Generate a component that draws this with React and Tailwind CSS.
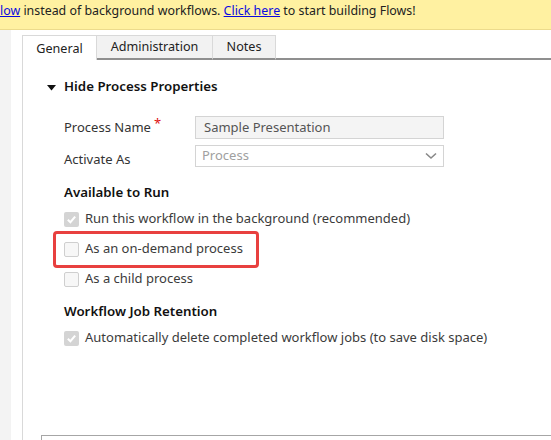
import React from 'react';

const font = { fontFamily: '"Segoe UI", "Noto Sans", "Open Sans", sans-serif' };

function Box({ checked }) {
  if (checked) {
    return (
      <span className="flex h-[15px] w-[15px] items-center justify-center rounded-[2px] bg-[#d4d4d4]">
        <svg width="11" height="11" viewBox="0 0 12 12">
          <path d="M2 6.3 L4.8 9 L10 2.8" fill="none" stroke="#fff" strokeWidth="2.2" />
        </svg>
      </span>
    );
  }
  return <span className="block h-[15px] w-[15px] rounded-[2px] border border-[#cfcfcf] bg-[#f7f7f7]" />;
}

function CheckRow({ checked, label, className = '' }) {
  return (
    <div className={`flex h-[18px] items-center gap-[6px] pl-[41px] ${className}`}>
      <Box checked={checked} />
      <span className="text-[13px] text-[#3b3b3b]">{label}</span>
    </div>
  );
}

export default function App() {
  return (
    <div className="h-[440px] w-[551px] overflow-hidden bg-white" style={font}>
      {/* banner */}
      <div className="flex h-[30px] items-start whitespace-nowrap border-b border-[#ecdb8c] bg-[#fff1a1] pt-[2px] text-[12.4px] text-[#222]">
        <a className="text-[#0a0ae0] underline">low</a>
        <span>&nbsp;instead of background workflows.&nbsp;</span>
        <a className="text-[#0a0ae0] underline">Click here</a>
        <span>&nbsp;to start building Flows!</span>
      </div>

      <div className="flex h-[410px]">
        <div className="w-[11px] bg-[#f3f3f3]" />
        <div className="w-[11px]" />
        <div className="mt-[5px] flex flex-1 flex-col border-l border-[#d9d9d9]">
          {/* tabs */}
          <div className="flex h-[25px] text-[12.6px] text-[#222]">
            <div className="flex w-[74px] items-center justify-center border-r border-t border-[#d9d9d9] bg-white pt-[2px]">General</div>
            <div className="flex w-[116px] items-center justify-center border-b-2 border-r border-t border-b-[#8f8f8f] border-r-[#d9d9d9] border-t-[#d9d9d9] bg-[#f2f2f2] pt-[1px]">Administration</div>
            <div className="flex w-[63px] items-center justify-center border-b-2 border-r border-t border-b-[#8f8f8f] border-r-[#d9d9d9] border-t-[#d9d9d9] bg-[#f2f2f2] pt-[1px]">Notes</div>
            <div className="flex-1 border-b-2 border-[#8f8f8f]" />
          </div>

          {/* section heading */}
          <div className="mt-[17px] flex h-[20px] items-center pl-[24px]">
            <svg width="9" height="6" viewBox="0 0 9 6" className="mt-[2px]">
              <path d="M0 0 H9 L4.5 5.5 Z" fill="#111" />
            </svg>
            <span className="ml-[8px] text-[13.3px] font-semibold text-[#111]">Hide Process Properties</span>
          </div>

          {/* fields */}
          <div className="mt-[19px] flex items-center">
            <div className="flex w-[172px] items-center pl-[41px] pt-[1px] text-[13px] text-[#333]">
              Process Name
              <span className="ml-[3px] -mt-[8px] text-[13px] text-[#d11]">*</span>
            </div>
            <div className="flex h-[23px] w-[249px] items-center border border-[#d4d4d4] bg-[#f4f4f4] pl-[8px] text-[13px] text-[#555]">
              Sample Presentation
            </div>
          </div>
          <div className="mt-[6px] flex h-[22px]">
            <div className="h-[22px] w-[172px] pl-[41px] pt-[3px] text-[13px] leading-[22px] text-[#333]">Activate As</div>
            <div className="flex h-[22px] w-[249px] items-center justify-between border border-[#d4d4d4] bg-white pl-[6px] pr-[6px] text-[13px] text-[#a0a0a0]">
              Process
              <svg width="12" height="8" viewBox="0 0 12 8">
                <path d="M1 1.5 L6 6 L11 1.5" fill="none" stroke="#888" strokeWidth="1.6" />
              </svg>
            </div>
          </div>

          {/* available to run */}
          <div className="mt-[16px] h-[18px] pl-[41px] text-[13.3px] font-semibold leading-[18px] text-[#111]">Available to Run</div>
          <CheckRow checked label="Run this workflow in the background (recommended)" className="mt-[9px]" />
          <div className="relative mt-[12px]">
            <CheckRow label="As an on-demand process" />
            <div className="absolute left-[30px] top-[-9px] h-[37px] w-[206px] rounded-[4px] border-[3px] border-[#e8403f]" />
          </div>
          <CheckRow label="As a child process" className="mt-[12px]" />

          <div className="mt-[14px] h-[18px] pl-[41px] text-[13.3px] font-semibold leading-[18px] text-[#111]">Workflow Job Retention</div>
          <CheckRow checked label="Automatically delete completed workflow jobs (to save disk space)" className="mt-[9px]" />

          <div className="flex-1" />
          <div className="ml-[18px] h-[5px] border-l border-t border-[#a6a6a6]" />
        </div>
      </div>
    </div>
  );
}
